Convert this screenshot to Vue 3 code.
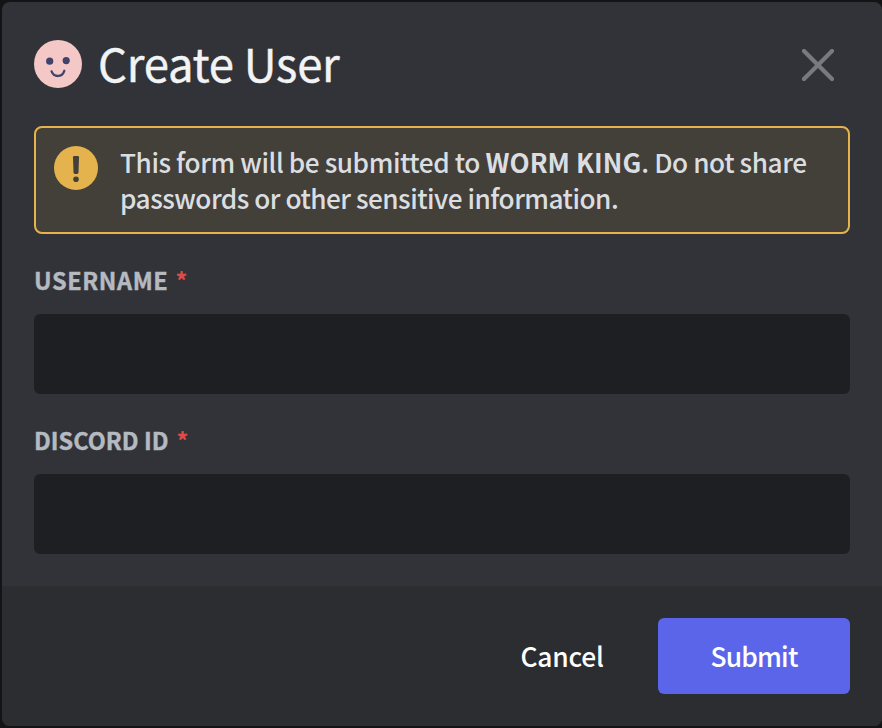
<script setup>
const fields = [
  { id: 'username', label: 'USERNAME' },
  { id: 'discord-id', label: 'DISCORD ID' },
]
</script>

<template>
  <div class="backdrop">
    <section class="modal" role="dialog" aria-labelledby="modal-title">
      <div class="body">
        <header class="header">
          <svg class="avatar" viewBox="0 0 48 48" aria-hidden="true">
            <circle cx="24" cy="24" r="24" fill="#f4c8c6" />
            <circle cx="15.7" cy="21.2" r="3.6" fill="#43426a" />
            <circle cx="32.2" cy="20.6" r="3.6" fill="#43426a" />
            <path d="M17.6 31.4C20 37.600 28 37.600 30.300 30.800" fill="none" stroke="#43426a" stroke-width="2.3" stroke-linecap="round" />
          </svg>
          <h1 id="modal-title" class="title">Create User</h1>
          <button class="close" aria-label="Close">
            <svg viewBox="0 0 32 32" aria-hidden="true">
              <path d="M2 2L30 30M30 2L2 30" stroke="#777a80" stroke-width="4.2" stroke-linecap="square" stroke-linejoin="round" />
            </svg>
          </button>
        </header>

        <div class="notice">
          <svg class="notice-icon" viewBox="0 0 44 44" aria-hidden="true">
            <circle cx="22" cy="22" r="22" fill="#e5b34e" />
            <path d="M20.2 10H23.8Q25 10 25 11.2L24.5 26.6Q24.4 28 23 28H21Q19.600 28 19.500 26.600L19 11.200Q19 10 20.200 10Z" fill="#43403a" />
            <circle cx="22" cy="33.300" r="2.800" fill="#43403a" />
          </svg>
          <p class="notice-text">
            <span class="line first">This form will be submitted to <strong>WORM KING</strong>. Do not share</span>
            <span class="line second">passwords or other sensitive information.</span>
          </p>
        </div>

        <div v-for="field in fields" :key="field.id" class="field">
          <label :for="field.id" class="label" :class="field.id">
            <span class="label-text">{{ field.label }}</span><span class="required">*</span>
          </label>
          <input :id="field.id" class="input" type="text" />
        </div>
      </div>

      <footer class="footer">
        <button class="button cancel"><span>Cancel</span></button>
        <button class="button submit"><span>Submit</span></button>
      </footer>
    </section>
  </div>
</template>

<style>
body {
  background: #141416;
}
</style>

<style scoped>
.backdrop {
  box-sizing: border-box;
  width: 882px;
  height: 728px;
  padding: 2px 0 2px 2px;
  background: #141416;
  font-family: "Noto Sans CJK SC", "Noto Sans", sans-serif;
}
.modal {
  display: flex;
  flex-direction: column;
  height: 724px;
  overflow: hidden;
  border-radius: 8px;
  background: #323338;
}
.body {
  display: flex;
  flex-direction: column;
  height: 584px;
  box-sizing: border-box;
  padding: 38px 32px 0;
}
.header {
  display: flex;
  align-items: center;
  height: 48px;
}
.avatar {
  width: 48px;
  height: 48px;
}
.title {
  margin: -4px auto 0 16px;
  color: #f2f3f5;
  font-size: 45.5px;
  font-weight: 400;
  line-height: 48px;
  letter-spacing: -0.25px;
  white-space: nowrap;
  -webkit-text-stroke: 0.4px currentColor;
}
.close {
  display: flex;
  margin-right: 16px;
  padding: 2px 0 0;
  border: 0;
  background: none;
}
.close svg {
  width: 32px;
  height: 32px;
}
.notice {
  display: flex;
  gap: 22px;
  box-sizing: border-box;
  height: 108px;
  margin-top: 38px;
  padding: 18px;
  border: 2px solid #e5b34e;
  border-radius: 8px;
  background: #43403a;
}
.notice-icon {
  flex: none;
  width: 44px;
  height: 44px;
}
.notice-text {
  margin: -2px 0 0;
  color: #dbdee1;
  font-size: 26.2px;
  font-weight: 500;
  line-height: 36px;
  white-space: nowrap;
}
.line {
  display: block;
}
.first {
  letter-spacing: -0.43px;
}
.second {
  letter-spacing: -0.51px;
}
.notice-text strong {
  font-weight: 700;
  letter-spacing: 0.08px;
}
.field {
  display: flex;
  flex-direction: column;
  height: 160px;
}
.label {
  display: flex;
  align-items: center;
  height: 32px;
  margin-top: 30px;
  margin-bottom: 18px;
  color: #b5bac1;
  font-size: 23.5px;
  font-weight: 700;
  line-height: 32px;
}
.label-text {
  -webkit-text-stroke: 0.4px currentColor;
}
.username .label-text {
  letter-spacing: 0.6px;
}
.required {
  margin-left: 8px;
  color: #e04b47;
}
.username .required {
  margin-left: 7px;
}
.input {
  box-sizing: border-box;
  width: 100%;
  height: 80px;
  padding: 20px;
  border: 0;
  border-radius: 6px;
  outline: 0;
  background: #1e1f22;
  color: #dbdee1;
  font: inherit;
}
.footer {
  display: flex;
  justify-content: flex-end;
  box-sizing: border-box;
  height: 140px;
  padding: 32px;
  background: #2b2d31;
}
.button {
  height: 76px;
  padding: 0;
  border: 0;
  border-radius: 6px;
  background: none;
  color: #fff;
  font-family: inherit;
  font-size: 26.4px;
  font-weight: 500;
  line-height: 36px;
}
.cancel {
  width: 192px;
  letter-spacing: -0.2px;
}
.submit {
  width: 192px;
  background: #5b65ea;
  letter-spacing: -0.8px;
}
</style>
